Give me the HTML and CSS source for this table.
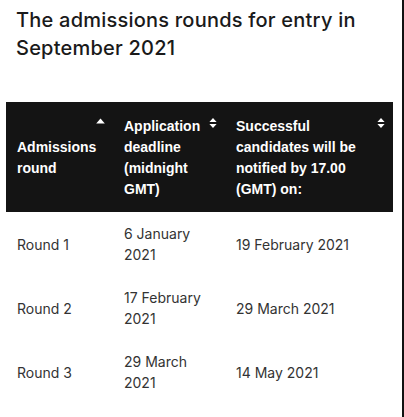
FILE: index.html
```html
<!DOCTYPE html>
<html lang="en">
<head>
<meta charset="utf-8">
<title>Admissions rounds</title>
<link rel="stylesheet" href="styles.css">
</head>
<body>
<div class="page">
  <h2 class="title">The admissions rounds for entry in September 2021</h2>
  <table class="rounds">
    <colgroup>
      <col class="c1"><col class="c2"><col class="c3">
    </colgroup>
    <thead>
      <tr>
        <th class="c-mid">Admissions round
          <svg class="sort" width="9" height="6" viewBox="0 0 9 6"><path d="M4.5 0.5 L8.8 5.6 L0.2 5.6 Z" fill="#fff"/></svg>
        </th>
        <th>Application deadline (midnight GMT)
          <svg class="sort sort2" width="8" height="10" viewBox="0 0 8 10"><path d="M4 0 L7.6 4 L0.4 4 Z M4 10 L7.6 6 L0.4 6 Z" fill="#fff"/></svg>
        </th>
        <th>Successful candidates will be notified by 17.00 (GMT) on:
          <svg class="sort sort2" width="8" height="10" viewBox="0 0 8 10"><path d="M4 0 L7.6 4 L0.4 4 Z M4 10 L7.6 6 L0.4 6 Z" fill="#fff"/></svg>
        </th>
      </tr>
    </thead>
    <tbody>
      <tr><td>Round 1</td><td>6 January 2021</td><td>19 February 2021</td></tr>
      <tr><td>Round 2</td><td>17 February 2021</td><td>29 March 2021</td></tr>
      <tr><td>Round 3</td><td>29 March 2021</td><td>14 May 2021</td></tr>
    </tbody>
  </table>
</div>
</body>
</html>
```

FILE: styles.css
```css
html, body {
  margin: 0;
  padding: 0;
  background: #fff;
}
.page {
  width: 402px;
  height: 417px;
  border-right: 2px solid #111;
  overflow: hidden;
  font-family: Inter, "Liberation Sans", sans-serif;
}
.title {
  margin: 6px 30px 0 16px;
  font-size: 20px;
  line-height: 28px;
  font-weight: 500;
  letter-spacing: 0.22px;
  color: #1a1a1a;
}
.rounds {
  margin: 40px 0 0 6px;
  border-collapse: collapse;
  table-layout: fixed;
  width: 387px;
}
.c1 { width: 107px; }
.c2 { width: 112px; }
.c3 { width: 168px; }
.rounds th {
  position: relative;
  background: #141414;
  color: #fff;
  font-family: "Liberation Sans", Arial, sans-serif;
  font-weight: bold;
  font-size: 14px;
  line-height: 21px;
  text-align: left;
  vertical-align: top;
  padding: 14px 24px 12px 11px;
}
.rounds th.c-mid {
  vertical-align: middle;
}
.sort {
  position: absolute;
  right: 8px;
  top: 16px;
  display: block;
}
.rounds td {
  font-size: 14px;
  line-height: 21px;
  color: #333;
  padding: 11px 20px 11px 11px;
  vertical-align: middle;
}
```
